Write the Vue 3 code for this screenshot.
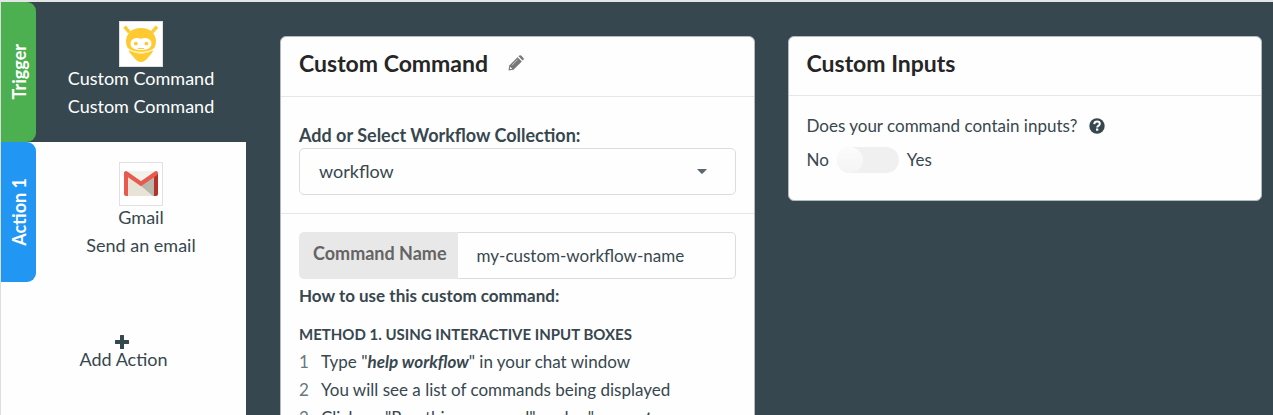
<script setup>
import { ref } from 'vue'

const collection = ref('workflow')
const commandName = ref('my-custom-workflow-name')
const hasInputs = ref(false)
</script>

<template>
  <div class="app">
    <aside class="sidebar">
      <section class="step step-trigger">
        <div class="tab tab-trigger"><span>Trigger</span></div>
        <div class="step-body">
          <svg class="logo" viewBox="0 0 44 46" aria-hidden="true">
            <rect x=".5" y=".5" width="43" height="45" fill="#fff" stroke="#e0e1e2" />
            <g stroke="#ffca2f" stroke-width="3.4" stroke-linecap="butt">
              <path d="M5.600 5.600 10.500 11.500M37.900 5.600 33 11.500" />
            </g>
            <path d="M22 7C12.500 7 7 13 7 20.500 7 25 9 28 12 30.200 18 32.200 26 32.200 32 30.200 35 28 37 25 37 20.500 37 13 31.500 7 22 7Z" fill="#ffca2f" />
            <path d="M9.500 29C17 33.500 27 33.500 34.500 29 33.500 32 31 34 29.500 36 27 39.500 24.500 41 22 41S17 39.500 14.500 36C13 34 10.500 32 9.500 29Z" fill="#ffca2f" />
            <path d="M8.500 27.500C16 32.600 28 32.600 35.500 27.500" fill="none" stroke="#fff" stroke-width=".9" />
            <path d="M22 17.800C17 15.800 11.500 18 11.500 22.500 11.500 27 15.500 29 22 29S32.500 27 32.500 22.500C32.500 18 27 15.800 22 17.800Z" fill="#fff" />
            <circle cx="16.800" cy="22.600" r="1.900" fill="#ffca2f" />
            <circle cx="27.400" cy="22.600" r="1.900" fill="#ffca2f" />
            <path d="M19 27.500H25" stroke="#ffca2f" stroke-width="1" />
          </svg>
          <div>Custom Command</div>
          <div>Custom Command</div>
        </div>
      </section>
      <section class="step">
        <div class="tab tab-action"><span>Action 1</span></div>
        <div class="step-body">
          <svg class="logo logo-mail" viewBox="0 0 44 44" aria-hidden="true">
            <rect x=".5" y=".5" width="43" height="43" fill="#fff" stroke="#e0e1e2" />
            <rect x="7" y="9" width="30" height="25" fill="#f2f2ec" />
            <path d="M8 14 22 24 8 34Z" fill="#e7e4d7" />
            <path d="M8 34 22 23 28 26 36 34Z" fill="#e7e4d7" />
            <path d="M22 24 35 14V34H34Z" fill="#b8b7ae" />
            <path d="M5 11.500 9 13V34H7Q5 34 5 32Z" fill="#e75a4d" />
            <path d="M35 13 39 11.500V32Q39 34 37 34H35Z" fill="#b63228" />
            <path d="M7 11.200 22 21.800 37 11.200" fill="none" stroke="#e75a4d" stroke-width="4.200" stroke-linecap="round" />
          </svg>
          <div>Gmail</div>
          <div>Send an email</div>
        </div>
      </section>
      <button class="add" type="button">
        <svg class="plus" viewBox="0 0 14 14" aria-hidden="true">
          <path d="M5.500 0H8.500Q9 0 9 .5V5H13.500Q14 5 14 5.500V8.500Q14 9 13.500 9H9V13.500Q9 14 8.500 14H5.500Q5 14 5 13.500V9H.5Q0 9 0 8.500V5.500Q0 5 .5 5H5V.5Q5 0 5.500 0Z" fill="currentColor" />
        </svg>
        <span>Add Action</span>
      </button>
    </aside>

    <main class="workspace">
      <section class="card">
        <header class="card-head">
          <h2>Custom Command</h2>
          <button class="edit" type="button" aria-label="Edit name">
            <svg viewBox="0 0 16 16" aria-hidden="true">
              <path d="M.5 15.500 1.300 10.500 9.600 2.200 13.800 6.400 5.500 14.700Z" fill="#777" />
              <path d="M10.500 1.300 11.300.5Q12.200-.2 13.100.6L15.400 2.900Q16.200 3.800 15.500 4.700L14.700 5.500Z" fill="#777" />
              <path d="M2.200 11.800 4.200 13.800 2.500 14.200 1.800 13.500Z" fill="#fff" />
              <path d="M4 10.200 9.700 4.500" stroke="#ddd" stroke-width=".8" />
            </svg>
          </button>
        </header>
        <div class="collection">
          <label for="collection">Add or Select Workflow Collection:</label>
          <div class="select">
            <select id="collection" v-model="collection">
              <option>workflow</option>
            </select>
            <svg class="caret" viewBox="0 0 10 5" aria-hidden="true">
              <path d="M0 0H10L5.500 4.700H4.500Z" fill="#5b686f" />
            </svg>
          </div>
        </div>
        <div class="command">
          <div class="field">
            <label for="command-name">Command Name</label>
            <input id="command-name" v-model="commandName" type="text" />
          </div>
          <h3>How to use this custom command:</h3>
          <h4>METHOD 1. USING INTERACTIVE INPUT BOXES</h4>
          <ol>
            <li><span class="num">1</span><span>Type "<b>help workflow</b>" in your chat window</span></li>
            <li><span class="num">2</span><span>You will see a list of commands being displayed</span></li>
            <li><span class="num">3</span><span>Click on "Run this command" under "<b>my-custom-workflow-name</b>"</span></li>
          </ol>
        </div>
      </section>

      <section class="card">
        <header class="card-head card-head-inputs"><h2>Custom Inputs</h2></header>
        <div class="inputs">
          <div class="question">
            <span id="question">Does your command contain inputs?</span>
            <svg class="help" viewBox="0 0 16 16" aria-hidden="true">
              <circle cx="8" cy="8" r="7.700" fill="#37474f" />
              <path d="M5.200 6.100C5.400 4.200 6.400 3.600 8 3.600 9.700 3.600 10.800 4.600 10.800 5.900 10.800 7.700 8.300 7.600 8.200 9.500" fill="none" stroke="#fff" stroke-width="2" />
              <rect x="7" y="10.500" width="2.300" height="2.200" fill="#fff" />
            </svg>
          </div>
          <div class="toggle-row">
            <span>No</span>
            <input v-model="hasInputs" type="checkbox" class="toggle" aria-labelledby="question" />
            <span>Yes</span>
          </div>
        </div>
      </section>
    </main>
  </div>
</template>

<style>
body {
  margin: 0;
  overflow: hidden;
}
</style>

<style scoped>
* {
  box-sizing: border-box;
}

.app {
  display: flex;
  height: 100vh;
  overflow: hidden;
  border-top: 2px solid #e4e5e6;
  border-left: 1px solid #dcdddd;
  background: #37474f;
  color: #37474f;
  font: 18px/28px Lato, sans-serif;
}

button,
input,
select {
  margin: 0;
  padding: 0;
  border: 0;
  background: none;
  color: inherit;
  font: inherit;
}

.sidebar {
  flex: none;
  width: 245px;
  background: #fefefe;
}

.step {
  display: flex;
  min-height: 140px;
}

.step-trigger {
  background: #37474f;
  color: #fff;
}

.tab {
  display: flex;
  flex: none;
  align-items: center;
  justify-content: center;
  width: 35px;
  border-radius: 0 9px 9px 0;
  color: #fff;
  font-weight: 700;
}

.tab span {
  writing-mode: vertical-rl;
  transform: rotate(180deg);
}

.tab-trigger {
  background: #4caf50;
}

.tab-action {
  background: #2196f3;
}

.step-body {
  flex: 1;
  padding-top: 19px;
  text-align: center;
}

.logo {
  display: block;
  width: 44px;
  height: 46px;
  margin: 0 auto -3px;
}

.step-body .logo-mail {
  height: 44px;
  margin-top: 1px;
}

.add {
  display: flex;
  flex-direction: column;
  align-items: center;
  width: 100%;
  padding-top: 53px;
  cursor: pointer;
}

.plus {
  width: 14px;
  height: 14px;
  margin: 0 4px -4px 0;
}

.workspace {
  display: grid;
  flex: 1;
  grid-template-columns: 1fr 1fr;
  gap: 33px;
  align-items: start;
  padding: 34px 11px 0 34px;
}

.card {
  min-width: 0;
  border: 1px solid #b4b9bc;
  border-radius: 6px;
  background: #fefefe;
}

.card-head {
  display: flex;
  align-items: center;
  gap: 20px;
  padding: 11px 18px 18px;
  border-bottom: 1px solid #e6e6e7;
}

.card-head-inputs {
  padding-bottom: 17px;
}

h2,
h3,
h4,
ol {
  margin: 0;
  padding: 0;
}

h2 {
  color: #262626;
  font-size: 23px;
  font-weight: 700;
  line-height: 30px;
}

.edit {
  width: 16px;
  height: 16px;
  cursor: pointer;
}

.edit svg {
  display: block;
}

.collection {
  padding: 25px 18px 18px;
  border-bottom: 1px solid #e6e6e7;
}

.collection label {
  display: block;
  font-weight: 700;
  line-height: 26px;
}

.select {
  display: grid;
  align-items: center;
}

.select select {
  grid-area: 1 / 1;
  width: 100%;
  height: 47px;
  padding: 0 19px 2px;
  border: 1px solid #dbdcdd;
  border-radius: 5px;
  appearance: none;
}

.caret {
  grid-area: 1 / 1;
  justify-self: end;
  width: 10px;
  height: 5px;
  margin-right: 29px;
  pointer-events: none;
}

.command {
  padding: 18px 18px 0;
}

.field {
  display: flex;
  height: 47px;
}

.field label {
  padding: 7px 11px 7px 14px;
  border-radius: 5px 0 0 5px;
  background: #e8e8e8;
  color: #646464;
  font-weight: 700;
}

.field input {
  flex: 1;
  min-width: 0;
  padding: 0 19px;
  border: 1px solid #dbdcdd;
  border-left: 0;
  border-radius: 0 5px 5px 0;
  font-size: 17px;
}

h3 {
  padding-top: 3px;
  font-size: 17px;
  line-height: 28px;
}

h4 {
  padding-top: 11px;
  font-size: 15px;
  line-height: 27px;
}

ol {
  font-size: 17px;
  list-style: none;
}

li {
  display: flex;
}

.num {
  flex: none;
  width: 22px;
  color: #6b777d;
}

li b {
  font-style: italic;
}

.inputs {
  padding: 16px 18px 26px;
  font-size: 17px;
}

.question {
  display: flex;
  align-items: center;
  gap: 12px;
}

.help {
  width: 16px;
  height: 16px;
}

.toggle-row {
  display: flex;
  align-items: center;
  gap: 8px;
  padding-top: 6px;
}

.toggle {
  display: flex;
  width: 62px;
  height: 26px;
  border-radius: 13px;
  background: #f0f0f0;
  appearance: none;
  cursor: pointer;
}

.toggle::before {
  width: 26px;
  height: 26px;
  border-radius: 50%;
  background: linear-gradient(#fcfcfc, #f4f4f4);
  content: '';
}

.toggle:checked {
  justify-content: flex-end;
  background: #2196f3;
}
</style>
